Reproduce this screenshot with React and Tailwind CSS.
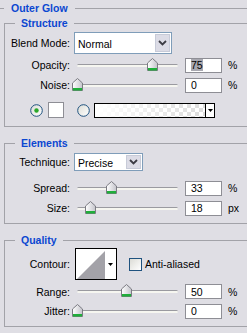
import React from 'react';

function Thumb({ pos }) {
  return (
    <svg
      width="11"
      height="13"
      viewBox="0 0 11 13"
      className="absolute top-[-7px]"
      style={{ left: pos - 5 }}
    >
      <defs>
        <linearGradient id="thumbFill" x1="0" y1="0" x2="1" y2="0">
          <stop offset="0" stopColor="#ffffff" />
          <stop offset="1" stopColor="#c4c4cb" />
        </linearGradient>
      </defs>
      <path d="M5.5 0.5 L10.5 5 V12.5 H0.5 V5 Z" fill="url(#thumbFill)" stroke="#7b7b82" />
      <rect x="1" y="10" width="9" height="2.5" fill="#1fae3a" />
    </svg>
  );
}

function Slider({ pos }) {
  return (
    <div className="relative ml-[7px] h-[3px] w-[101px] rounded-full border-t border-[#9a9aa0] bg-[#f6f6f0]">
      <Thumb pos={pos} />
    </div>
  );
}

function ValueBox({ value, selected }) {
  return (
    <div className="ml-[7px] flex h-[15px] w-[37px] items-center border border-[#8e8e95] bg-white pl-[5px]">
      <span className={selected ? 'bg-[#a8a8b0] leading-[12px]' : 'leading-[12px]'}>{value}</span>
    </div>
  );
}

function SliderRow({ label, value, pos, unit, selected, className }) {
  return (
    <div className={`flex items-center ${className}`}>
      <span className="w-[65px] text-right">{label}</span>
      <Slider pos={pos} />
      <ValueBox value={value} selected={selected} />
      <span className="ml-[6px]">{unit}</span>
    </div>
  );
}

function Chevron() {
  return (
    <svg width="9" height="6" viewBox="0 0 9 6">
      <path d="M1 1 L4.5 4.5 L8 1" fill="none" stroke="#3c3c44" strokeWidth="1.8" />
    </svg>
  );
}

function Select({ value, width, height }) {
  return (
    <div className={`ml-[4px] flex items-stretch border border-[#7f9db9] bg-white ${width} ${height}`}>
      <span className="flex flex-1 items-center pl-[3px] pt-[2px]">{value}</span>
      <div className="m-[1px] flex w-[15px] items-center justify-center border border-[#c7cbd8] bg-[#dcdce6]">
        <Chevron />
      </div>
    </div>
  );
}

function Radio({ checked }) {
  return (
    <svg width="13" height="13" viewBox="0 0 13 13">
      <defs>
        <linearGradient id="radioFill" x1="0" y1="0" x2="1" y2="1">
          <stop offset="0" stopColor="#dcdcd6" />
          <stop offset="1" stopColor="#ffffff" />
        </linearGradient>
      </defs>
      <circle cx="6.5" cy="6.5" r="5.8" fill="url(#radioFill)" stroke="#1f527f" />
      {checked && <circle cx="6.5" cy="6.5" r="2.2" fill="#2aa82a" />}
    </svg>
  );
}

function DownArrow() {
  return (
    <svg width="5" height="3" viewBox="0 0 5 3">
      <path d="M0 0 H5 L2.5 3 Z" fill="#000" />
    </svg>
  );
}

function Group({ title, className, children }) {
  return (
    <fieldset className={`ml-[4px] w-[260px] border border-[#a2a2a8] ${className}`}>
      <legend className="ml-[10px] px-[6px] text-[10.5px] font-bold leading-[14px] text-[#0b47d1]">
        {title}
      </legend>
      {children}
    </fieldset>
  );
}

export default function App() {
  return (
    <div className="h-[333px] w-[247px] overflow-hidden bg-[#dfdee4] font-['Liberation_Sans',Arial,sans-serif] text-[10.5px] leading-[14px] text-black">
      {/* Outer Glow */}
      <div className="flex h-[16px] items-center">
        <div className="h-px w-[4px] bg-[#a2a2a8]" />
        <span className="ml-[7px] text-[10.5px] font-bold text-[#0b47d1]">Outer Glow</span>
        <div className="ml-[7px] h-px flex-1 bg-[#a2a2a8]" />
      </div>

      {/* Structure */}
      <Group title="Structure" className="pb-[8px]">
        <div className="mt-[2px] flex h-[22px] items-center">
          <span className="w-[65px] text-right">Blend Mode:</span>
          <Select value="Normal" width="w-[98px]" height="h-[22px]" />
        </div>
        <SliderRow label="Opacity:" value="75" pos={75} unit="%" selected className="mt-[1px] h-[20px]" />
        <SliderRow label="Noise:" value="0" pos={0} unit="%" className="h-[20px]" />
        <div className="mt-[7px] flex h-[16px] items-center">
          <div className="ml-[25px]">
            <Radio checked />
          </div>
          <div className="ml-[5px] h-[16px] w-[16px] border border-[#8e8e95] bg-white" />
          <div className="ml-[13px]">
            <Radio />
          </div>
          <div className="ml-[4px] flex h-[15px] w-[121px] border border-black">
            <div className="flex-1 bg-[image:linear-gradient(to_right,#ffffff,rgba(255,255,255,0)),conic-gradient(#dcdcdc_25%,#ffffff_0_50%,#dcdcdc_0_75%,#ffffff_0)] bg-[length:100%_100%,8px_8px]" />
            <div className="flex w-[9px] items-center justify-center border-l border-black bg-white">
              <DownArrow />
            </div>
          </div>
        </div>
      </Group>

      {/* Elements */}
      <Group title="Elements" className="mt-[9px] pb-[5px]">
        <div className="mt-[3px] flex h-[18px] items-center">
          <span className="w-[65px] text-right">Technique:</span>
          <Select value="Precise" width="w-[69px]" height="h-[18px]" />
        </div>
        <SliderRow label="Spread:" value="33" pos={34} unit="%" className="mt-[7px] h-[20px]" />
        <SliderRow label="Size:" value="18" pos={13} unit="px" className="h-[20px]" />
      </Group>

      {/* Quality */}
      <Group title="Quality" className="mt-[9px] pb-[5px]">
        <div className="mt-[1px] flex h-[32px] items-center">
          <span className="w-[65px] text-right">Contour:</span>
          <div className="ml-[5px] flex h-[32px] w-[42px] border border-black bg-white">
            <svg width="29" height="30" viewBox="0 0 29 30" className="block">
              <polygon points="1,30 29,2 29,30" fill="#a3a2a8" />
            </svg>
            <div className="flex flex-1 items-center justify-center">
              <DownArrow />
            </div>
          </div>
          <div className="ml-[12px] h-[13px] w-[13px] border border-[#1f527f] bg-[linear-gradient(135deg,#dcdcd6,#ffffff)]" />
          <span className="ml-[3px]">Anti-aliased</span>
        </div>
        <SliderRow label="Range:" value="50" pos={49} unit="%" className="mt-[2px] h-[19px]" />
        <SliderRow label="Jitter:" value="0" pos={0} unit="%" className="h-[20px]" />
      </Group>
    </div>
  );
}
